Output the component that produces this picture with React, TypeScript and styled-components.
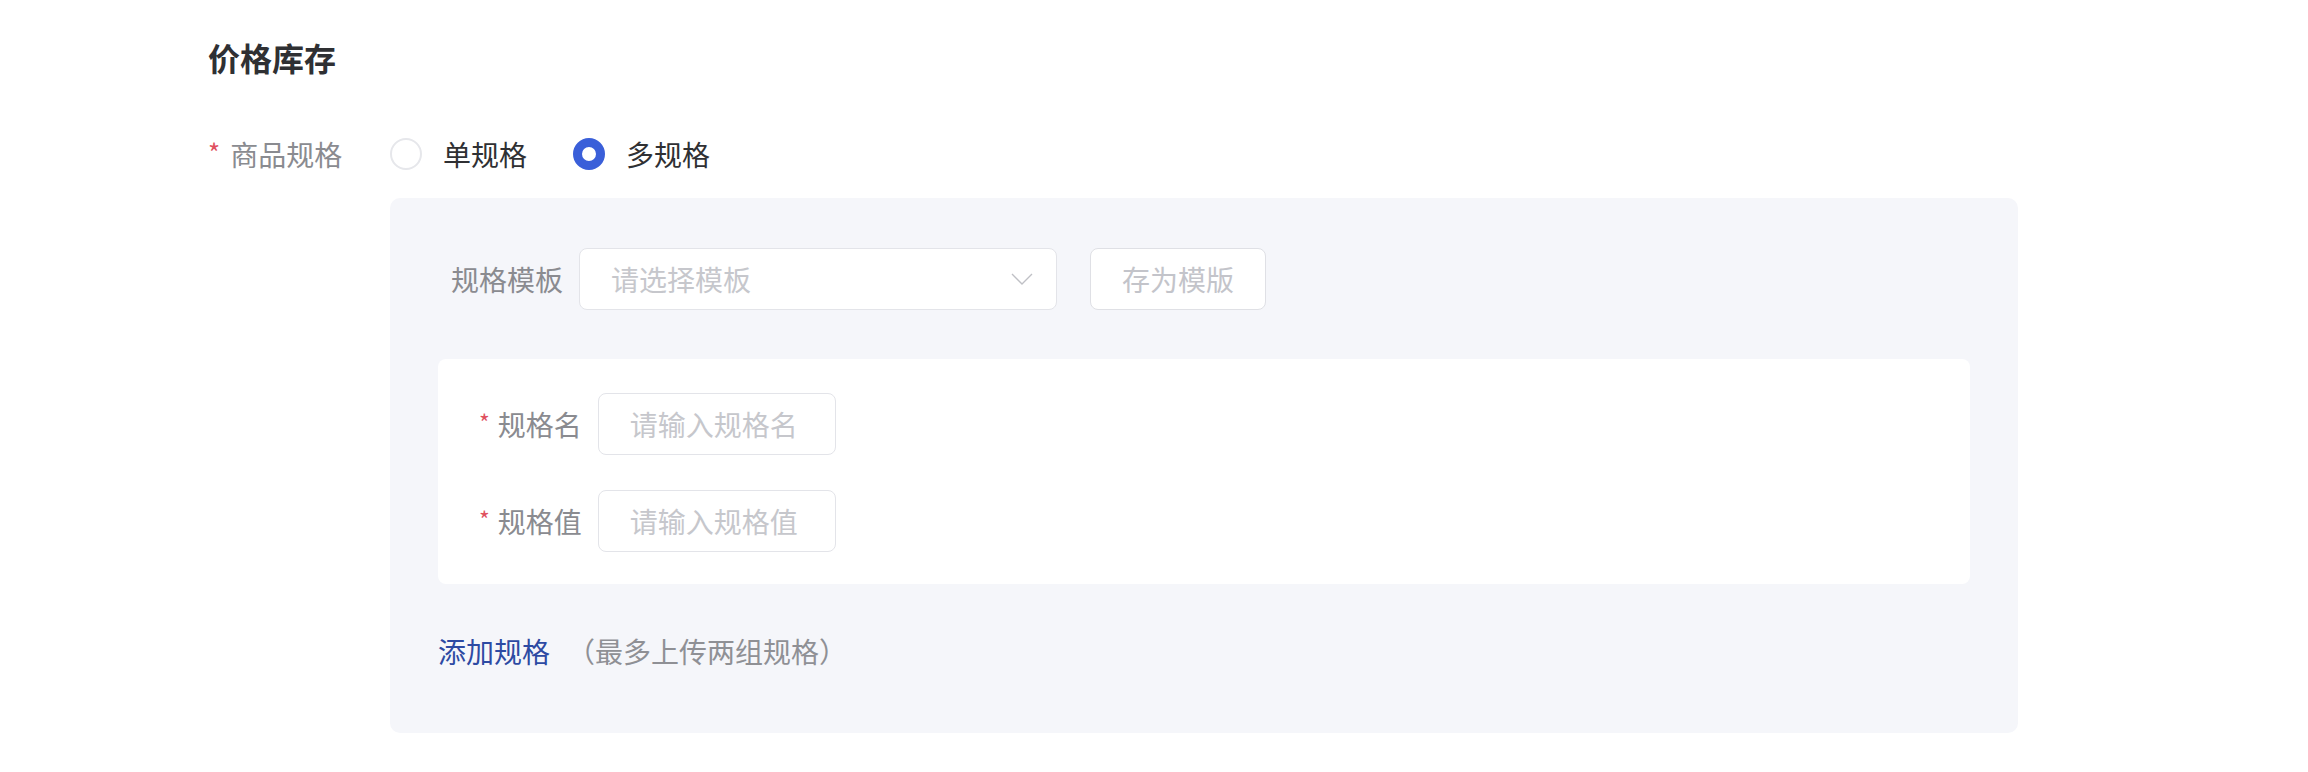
import React from "react";
import styled, { createGlobalStyle } from "styled-components";

const GlobalStyle = createGlobalStyle`
  html, body {
    margin: 0;
    padding: 0;
    background: #ffffff;
  }
  body {
    font-family: "Noto Sans CJK SC", "Noto Sans", sans-serif;
    -webkit-font-smoothing: antialiased;
  }
  * { box-sizing: border-box; }
`;

const Page = styled.div`
  padding: 35px 0 0 208px;
`;

const Title = styled.h2`
  margin: 0;
  font-size: 32px;
  line-height: 44px;
  font-weight: 600;
  color: #2f3033;
`;

const FieldRow = styled.div`
  display: flex;
  align-items: center;
  margin-top: 59px;
  height: 32px;
`;

const FieldLabel = styled.div`
  width: 182px;
  display: flex;
  align-items: center;
  font-size: 28px;
  line-height: 32px;
  color: #8a8b90;
`;

const Star = styled.span`
  color: #e0505e;
  font-size: 26px;
  line-height: 1;
  margin-right: 10px;
  position: relative;
  top: -2px;
`;

const RadioGroup = styled.div`
  display: flex;
  align-items: center;
`;

const RadioItem = styled.label`
  display: flex;
  align-items: center;
  gap: 21px;
  margin-right: 46px;
  font-size: 28px;
  line-height: 32px;
  color: #2f3033;
  cursor: pointer;
`;

const RadioDot = styled.span<{ $checked?: boolean }>`
  width: 32px;
  height: 32px;
  border-radius: 50%;
  background: #ffffff;
  border: ${(p) => (p.$checked ? "9px solid #3a5fd9" : "2px solid #e6e7eb")};
  flex: none;
`;

const Panel = styled.div`
  margin: 28px 0 0 182px;
  width: 1628px;
  background: #f5f6fa;
  border-radius: 10px;
  padding: 50px 48px 62px;
`;

const TemplateRow = styled.div`
  display: flex;
  align-items: center;
  padding-left: 13px;
  height: 62px;
`;

const PanelLabel = styled.span`
  font-size: 28px;
  line-height: 40px;
  color: #8a8b90;
  margin-right: 16px;
`;

const Select = styled.div`
  width: 478px;
  height: 62px;
  background: #ffffff;
  border: 1px solid #e3e4e9;
  border-radius: 8px;
  display: flex;
  align-items: center;
  justify-content: space-between;
  padding: 0 23px 0 31px;
`;

const Placeholder = styled.span`
  font-size: 28px;
  line-height: 40px;
  color: #c6c7cc;
`;

const GhostButton = styled.button`
  margin-left: 33px;
  width: 176px;
  height: 62px;
  background: #ffffff;
  border: 1px solid #dfe0e5;
  border-radius: 8px;
  font-family: inherit;
  font-size: 28px;
  color: #c3c4ca;
  padding: 0;
`;

const SpecCard = styled.div`
  margin-top: 49px;
  background: #ffffff;
  border-radius: 8px;
  padding: 34px 41px 32px;
  display: flex;
  flex-direction: column;
  gap: 35px;
`;

const SpecRow = styled.div`
  display: flex;
  align-items: center;
  height: 62px;
`;

const SpecLabel = styled.span`
  display: flex;
  align-items: center;
  font-size: 28px;
  line-height: 40px;
  color: #8a8b90;
  margin-right: 16px;
`;

const SmallStar = styled(Star)`
  font-size: 23px;
  margin-right: 8px;
`;

const TextInput = styled.div`
  width: 238px;
  height: 62px;
  border: 1px solid #e3e4e9;
  border-radius: 8px;
  background: #ffffff;
  display: flex;
  align-items: center;
  padding-left: 31px;
`;

const Footer = styled.div`
  margin-top: 47px;
  display: flex;
  align-items: center;
  font-size: 28px;
  line-height: 40px;
`;

const Link = styled.a`
  color: #2d4aa3;
  text-decoration: none;
  cursor: pointer;
`;

const Hint = styled.span`
  margin-left: 17px;
  color: #8f9095;
`;

const Chevron = () => (
  <svg width="22" height="12" viewBox="0 0 22 12" fill="none">
    <path d="M1 1 L11 11 L21 1" stroke="#bfc0c5" strokeWidth="1.4" />
  </svg>
);

export default function App() {
  return (
    <>
      <GlobalStyle />
      <Page>
        <Title>价格库存</Title>
        <FieldRow>
          <FieldLabel>
            <Star>*</Star>商品规格
          </FieldLabel>
          <RadioGroup>
            <RadioItem>
              <RadioDot />
              单规格
            </RadioItem>
            <RadioItem>
              <RadioDot $checked />
              多规格
            </RadioItem>
          </RadioGroup>
        </FieldRow>
        <Panel>
          <TemplateRow>
            <PanelLabel>规格模板</PanelLabel>
            <Select>
              <Placeholder>请选择模板</Placeholder>
              <Chevron />
            </Select>
            <GhostButton>存为模版</GhostButton>
          </TemplateRow>
          <SpecCard>
            <SpecRow>
              <SpecLabel>
                <SmallStar>*</SmallStar>规格名
              </SpecLabel>
              <TextInput>
                <Placeholder>请输入规格名</Placeholder>
              </TextInput>
            </SpecRow>
            <SpecRow>
              <SpecLabel>
                <SmallStar>*</SmallStar>规格值
              </SpecLabel>
              <TextInput>
                <Placeholder>请输入规格值</Placeholder>
              </TextInput>
            </SpecRow>
          </SpecCard>
          <Footer>
            <Link>添加规格</Link>
            <Hint>（最多上传两组规格）</Hint>
          </Footer>
        </Panel>
      </Page>
    </>
  );
}
